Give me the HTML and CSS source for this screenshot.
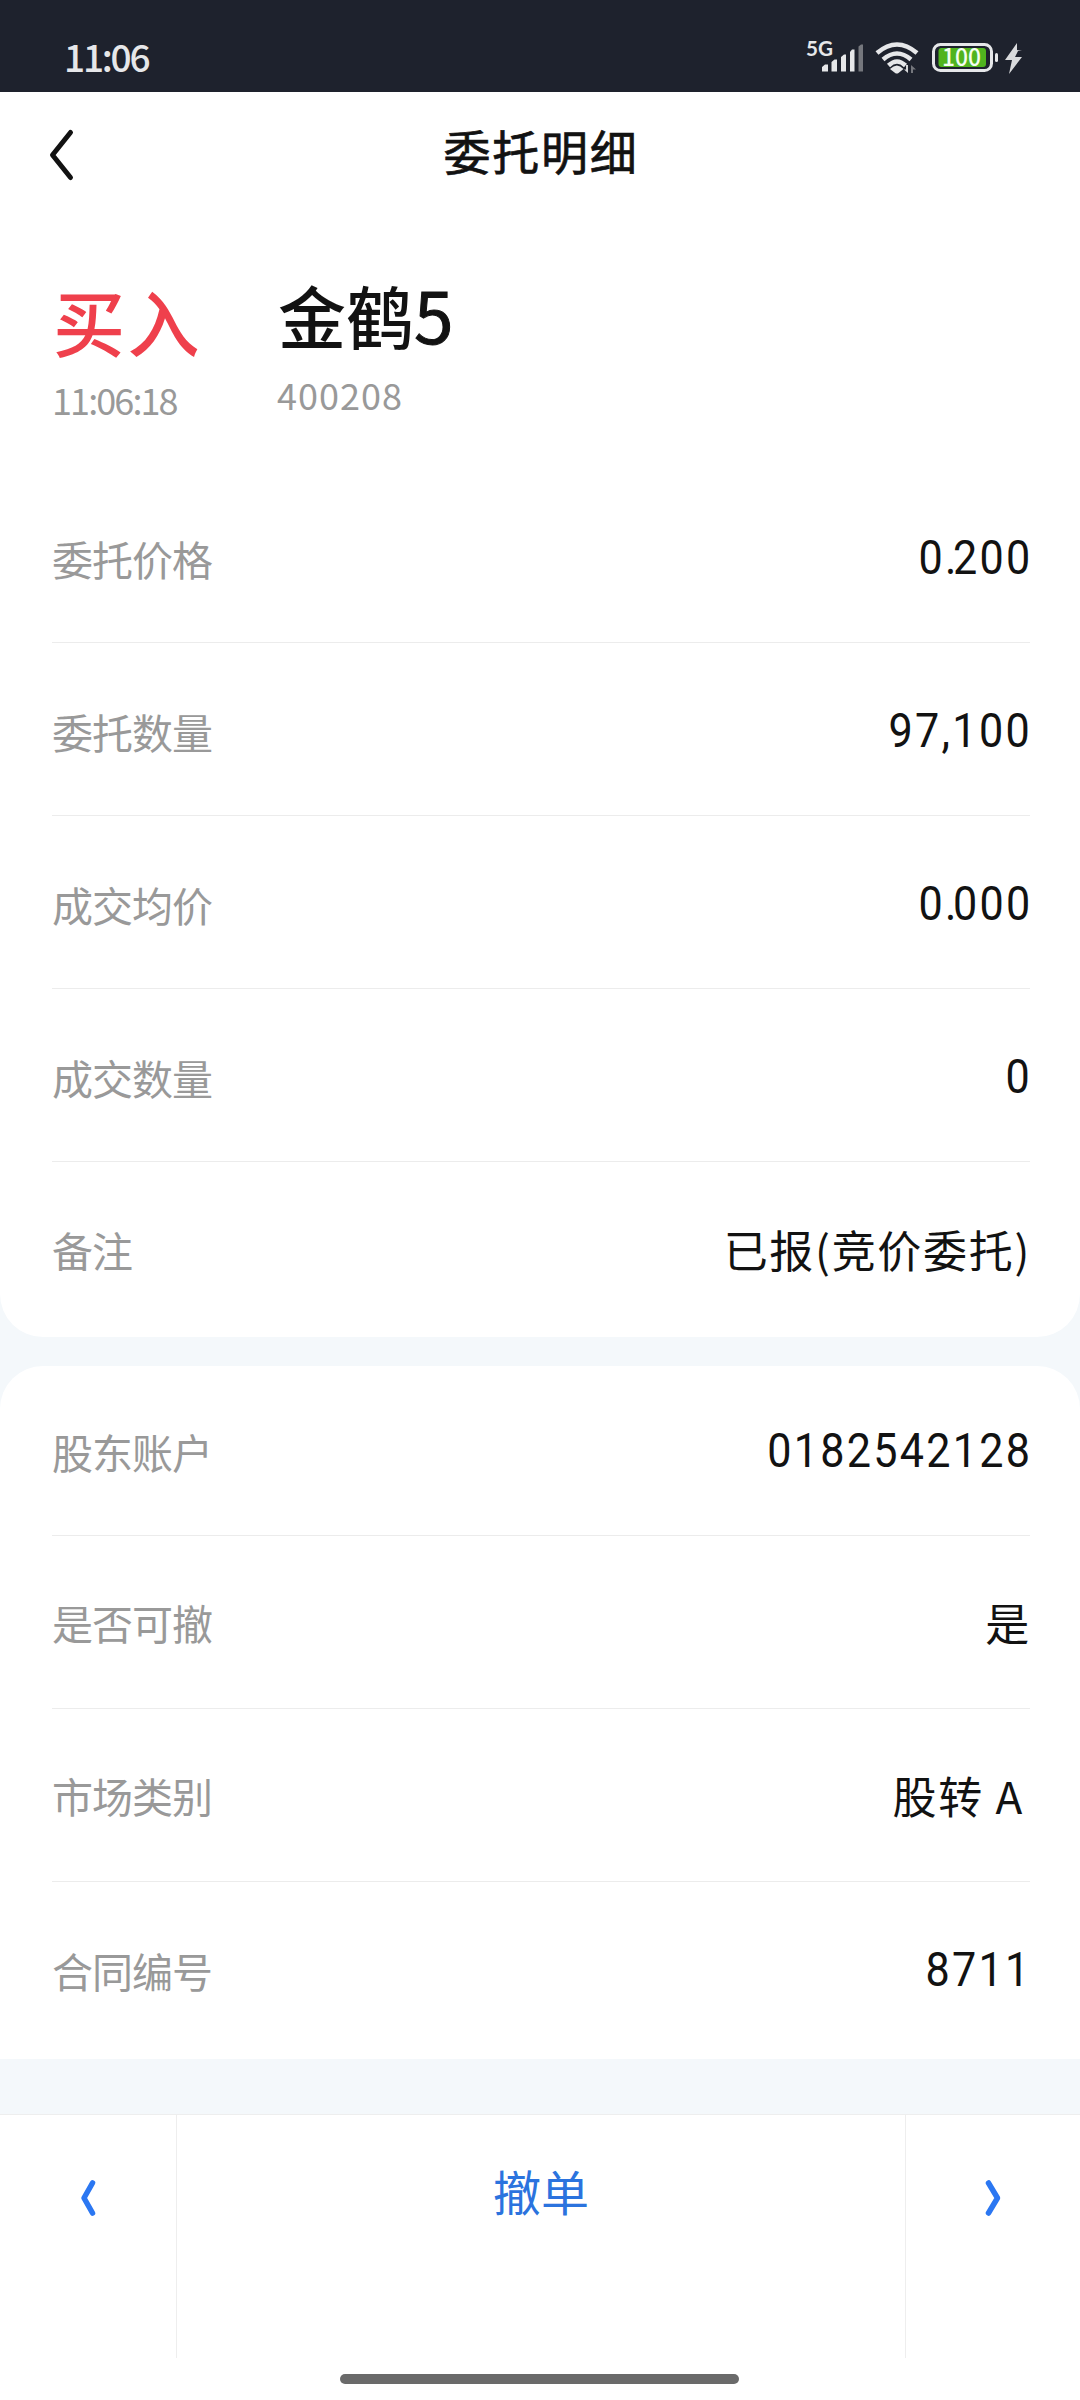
FILE: index.html
```html
<!DOCTYPE html>
<html lang="zh-CN">
<head>
<meta charset="utf-8">
<title>委托明细</title>
<link rel="stylesheet" href="styles.css">
</head>
<body>
<div class="screen">
  <div class="status">
    <span class="clock">11:06</span>
    <svg class="status-icons" width="228" height="56" viewBox="800 28 228 56">
      <text class="net" x="806" y="56" textLength="27" lengthAdjust="spacingAndGlyphs">5G</text>
      <g fill="#e6e7e9">
        <path d="M822 67l3-2.500h3v7h-6zM831.500 62l3-2.500h2.500v12h-5.500zM841 57l3-2.500h2v17h-5zM850 52l2-2.500h2.500v22H850z"/>
        <path d="M858.500 46.500l2.500-2h2v27h-4.500z" fill="#75777d"/>
        <path d="M890 69q7-7 13.500 0l-5 4q-1.700 1-3.400 0z"/>
        <rect x="995" y="53" width="3" height="9" rx="1.500"/>
      </g>
      <g fill="none" stroke="#e6e7e9" stroke-width="4.500">
        <path d="M877 53q20-17 40 0M883 59.500q14-12 28 0M888.500 65.500q8.500-8 17 0"/>
        <rect x="933.500" y="44.500" width="58" height="26" rx="7" stroke-width="3"/>
      </g>
      <path d="M908 65v8l-4-3.500h2V65z" fill="#d5d6d8"/>
      <path d="M911 73v-8l5 4.500h-3V73z" fill="#75777d"/>
      <rect x="938.500" y="48" width="47.500" height="19" rx="3" fill="#50b41e"/>
      <text class="level" x="942" y="66" textLength="39" lengthAdjust="spacingAndGlyphs">100</text>
      <path d="M1017 43l-12 17h7l-3 14 13-17h-7l3-6h4l-5-1z" fill="#d9dadc"/>
    </svg>
  </div>

  <main class="page">
    <section class="card card-top">
      <header class="nav">
        <svg class="back" width="28" height="54" viewBox="0 0 28 54"><path d="M22.500 4.500L4.500 27l18 22.500" fill="none" stroke="#121212" stroke-width="5" stroke-linecap="round" stroke-linejoin="round"/></svg>
        <h1 class="title">委托明细</h1>
      </header>
      <div class="summary">
        <div class="side"><div class="action">买入</div><div class="sub time">11:06:18</div></div>
        <div class="stock"><div class="name">金鹤<span class="name-num">5</span></div><div class="sub code">400208</div></div>
      </div>
      <div class="row"><span class="label">委托价格</span><span class="num">0<span class="dot">.</span>200</span></div>
      <div class="row"><span class="label">委托数量</span><span class="num">97,100</span></div>
      <div class="row"><span class="label">成交均价</span><span class="num">0<span class="dot">.</span>000</span></div>
      <div class="row"><span class="label">成交数量</span><span class="num">0</span></div>
      <div class="row last"><span class="label">备注</span><span class="value">已报(竞价委托)</span></div>
    </section>
    <section class="card card-bottom">
      <div class="row first"><span class="label">股东账户</span><span class="num">0182542128</span></div>
      <div class="row"><span class="label">是否可撤</span><span class="value">是</span></div>
      <div class="row"><span class="label">市场类别</span><span class="value market">股转 A</span></div>
      <div class="row last"><span class="label">合同编号</span><span class="num">8711</span></div>
    </section>
  </main>

  <footer class="footer">
    <div class="actions">
      <div class="step"><svg width="18" height="38" viewBox="0 0 18 38"><path d="M13.500 4L5 19l8.500 15"/></svg></div>
      <div class="cancel">撤单</div>
      <div class="step"><svg width="18" height="38" viewBox="0 0 18 38"><path d="M4.500 4l9 15-9 15"/></svg></div>
    </div>
    <div class="home"></div>
  </footer>
</div>
</body>
</html>
```
FILE: styles.css
```css
* { box-sizing: border-box; }
body { margin: 0; background: #fff; font-family: "Noto Sans CJK SC", sans-serif; color: #121212; }
.screen { width: 1080px; height: 2400px; display: flex; flex-direction: column; overflow: hidden; }

.status { height: 92px; padding: 0 52px 0 64px; background: #1e222d; display: flex; align-items: flex-start; justify-content: space-between; }
.clock { margin-top: 30px; font-size: 37px; line-height: 52px; font-weight: 500; color: #e6e7e9; letter-spacing: -2.2px; }
.status-icons { margin-top: 28px; overflow: visible; }
.net { font: 700 20px Lato, sans-serif; fill: #e6e7e9; }
.level { font: 500 24px "Noto Sans CJK SC", sans-serif; fill: #f4fff0; }

.page { height: 2022px; background: #f4f8fb; }
.card { background: #fff; padding: 0 50px 0 52px; }
.card-top { height: 1245px; border-radius: 0 0 43px 43px; }
.card-bottom { height: 693px; margin-top: 29px; border-radius: 43px 43px 0 0; }

.nav { height: 127px; display: grid; grid-template-columns: 28px 1fr 28px; align-items: start; }
.back { margin: 36px 0 0 -4px; }
.title { margin: 23px 0 0; text-align: center; font-size: 47px; line-height: 70px; font-weight: 400; letter-spacing: 1.7px; -webkit-text-stroke: 0.7px currentColor; }

.summary { height: 251px; display: flex; }
.side { width: 225px; padding-top: 51px; }
.stock { padding-top: 46px; }
.action { font-size: 72px; line-height: 100px; font-weight: 500; color: #ef404c; letter-spacing: 2.5px; margin-left: 1px; }
.name { font-size: 68px; line-height: 100px; font-weight: 500; margin-left: 1px; }
.name-num { font-size: 71px; line-height: 1; font-weight: 400; -webkit-text-stroke: 1px currentColor; }
.sub { font-size: 36px; line-height: 52px; color: #999; white-space: nowrap; }
.time { margin-top: 3px; letter-spacing: -1.9px; }
.code { margin-top: 3px; letter-spacing: 1px; }

.row { height: 173px; border-bottom: 1px solid #ececec; display: flex; align-items: center; justify-content: space-between; }
.card-top .row { padding-top: 3px; }
.card-bottom .row.last { height: 175px; border-bottom: 0; }
.card-top .row.last { height: 174px; padding-top: 0; border-bottom: 0; }
.row.first { height: 170px; }
.label { font-size: 41px; line-height: 60px; letter-spacing: -1px; color: #999; }
.value { font-size: 44px; line-height: 66px; letter-spacing: 1.7px; margin: -1px -1px 0 0; }
.market { margin-right: 6px; }
.num { font-family: Roboto, sans-serif; font-size: 49px; line-height: 60px; letter-spacing: 2.6px; margin-right: -2px; transform: scaleX(0.88); transform-origin: right center; }
.dot { letter-spacing: -4px; }

.footer { height: 286px; }
.actions { height: 244px; border-top: 1px solid #eee; display: grid; grid-template-columns: 176px 730px 174px; text-align: center; }
.step { padding-top: 64px; }
.step path { fill: none; stroke: #2b77f2; stroke-width: 5.5px; stroke-linecap: round; stroke-linejoin: round; }
.cancel { border: solid #eee; border-width: 0 1px; padding-top: 40px; color: #2b73de; font-size: 48px; line-height: 70px; }
.home { width: 399px; height: 10px; margin: 16px 0 0 340px; border-radius: 5px; background: #6a6a6a; }
```
